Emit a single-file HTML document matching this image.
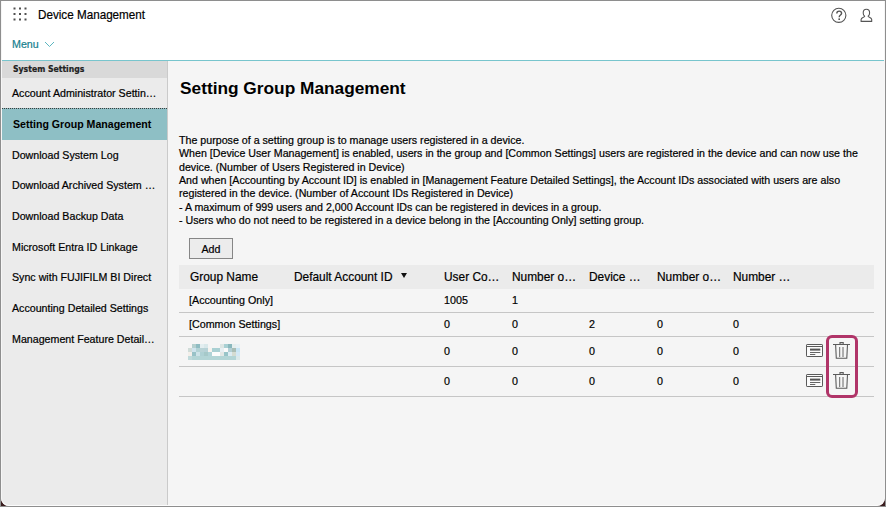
<!DOCTYPE html>
<html lang="en">
<head>
<meta charset="utf-8">
<title>Device Management</title>
<style>
*{box-sizing:border-box;margin:0;padding:0}
html,body{width:886px;height:507px;overflow:hidden;background:#8e8e8e}
body{font-family:"Liberation Sans",Arial,sans-serif;color:#000;position:relative;-webkit-text-stroke:.2px currentColor}
.frame{position:absolute;left:0;top:0;width:886px;height:507px;background:#8e8e8e}
.dark{position:absolute;left:1px;top:1px;width:884px;height:505px;background:#3b1d1f}
.gloss{position:absolute;left:0;top:0;width:884px;height:505px;border:1px solid #f6f6f6;border-bottom-color:#fcfcfc;border-top:none;border-radius:0 0 8px 8px;pointer-events:none}
.win{position:absolute;left:1px;top:1px;width:884px;height:505px;background:#f5f5f5;border-radius:0 0 8px 8px;overflow:hidden}
.hdr{position:absolute;left:0;top:0;width:884px;height:59px;background:#fff}
.tline{position:absolute;left:0;top:59px;width:884px;height:1px;background:#78c5cd}
.apptitle{position:absolute;left:37px;top:6px;font-size:13px;line-height:16px;color:#000;white-space:nowrap;transform-origin:0 0;transform:scaleX(.898)}
.grid{position:absolute;left:12px;top:6px;width:15px;height:15px}
.menu{position:absolute;left:11px;top:36px;font-size:10.7px;line-height:14px;color:#18808e;white-space:nowrap}
.chev{position:absolute;left:43px;top:40px;width:11px;height:7px}
.ico-help{position:absolute;left:829px;top:6px;width:17px;height:17px}
.ico-user{position:absolute;left:858px;top:7px;width:15px;height:15px}
.side{position:absolute;left:0;top:60px;width:166px;height:445px;background:#ebebeb}
.sideborder{position:absolute;left:166px;top:60px;width:1px;height:445px;background:#cacaca}
.sidehead{position:absolute;left:0;top:0;width:166px;height:17px;background:#d9d9d9;font-size:8.6px;font-weight:bold;line-height:16px;padding-left:12px;color:#222;font-family:"DejaVu Sans Condensed","DejaVu Sans","Liberation Sans",sans-serif}
.item{position:absolute;left:0;width:166px;height:31px;font-size:10.67px;line-height:31px;padding-left:11px;white-space:nowrap;color:#000}
.item.sel{background:#8ebfc5;font-weight:bold;-webkit-text-stroke:0;border-top:1px dotted #3c3c3c;padding-left:12px;line-height:31px;font-size:10.6px}
h1{-webkit-text-stroke:0;position:absolute;left:179px;top:77px;font-size:17.3px;line-height:20px;font-weight:bold;color:#000;white-space:nowrap}
.desc{position:absolute;left:178px;top:133px;width:700px;font-size:10.67px;line-height:13.33px;color:#000}
.desc div{white-space:nowrap}
.btn{position:absolute;left:188px;top:237px;width:44px;height:21px;border:1px solid #868686;background:#ececec;font-size:10.67px;line-height:21px;text-align:center;color:#000}
.thead{position:absolute;left:178px;top:264px;width:695px;height:24px;background:#ebebeb}
.th{position:absolute;top:264px;font-size:11.9px;line-height:25px;white-space:nowrap;color:#000}
.td{position:absolute;font-size:10.72px;line-height:14px;white-space:nowrap;color:#000}
.hl{position:absolute;left:178px;width:695px;height:1px;background:#c6c6c6}
.sort{position:absolute;left:400px;top:272px;width:6px;height:5px}
.blur{position:absolute;left:187px;top:343px;width:52px;height:16px}
.ico-det{position:absolute;left:805px;width:17px;height:13px}
.ico-del{position:absolute;left:832px;width:17px;height:17px}
.mark{position:absolute;left:825px;top:334px;width:32px;height:63px;border:3px solid #b03468;border-radius:6px}
</style>
</head>
<body>
<div class="frame"></div>
<div class="dark"></div>
<div class="win">
  <div class="hdr"></div>
  <div class="tline"></div>
  <svg class="grid" viewBox="0 0 15 15"><g fill="#505050">
    <rect x="0.5" y="0.5" width="2" height="2"/><rect x="6" y="0.5" width="2" height="2"/><rect x="11.5" y="0.5" width="2" height="2"/>
    <rect x="0.5" y="6" width="2" height="2"/><rect x="6" y="6" width="2" height="2"/><rect x="11.5" y="6" width="2" height="2"/>
    <rect x="0.5" y="11.5" width="2" height="2"/><rect x="6" y="11.5" width="2" height="2"/><rect x="11.5" y="11.5" width="2" height="2"/>
  </g></svg>
  <div class="apptitle">Device Management</div>
  <div class="menu">Menu</div>
  <svg class="chev" viewBox="0 0 11 7"><path d="M1 1 L5.5 5.5 L10 1" fill="none" stroke="#5bb6c0" stroke-width="1"/></svg>
  <svg class="ico-help" viewBox="0 0 17 17"><circle cx="8.8" cy="8.3" r="7.1" fill="none" stroke="#555" stroke-width="1.1"/><path d="M6.8 6.6 C6.8 4.9 7.9 4.1 9.2 4.1 C10.6 4.1 11.6 5 11.6 6.3 C11.6 8 9.2 8.1 9.2 10.2" fill="none" stroke="#555" stroke-width="1.4"/><rect x="8.4" y="11.4" width="1.6" height="1.6" fill="#555"/></svg>
  <svg class="ico-user" viewBox="0 0 15 15"><path d="M7.4 1.3 C9.3 1.3 10.6 2.8 10.6 4.9 C10.6 6.4 10 7.6 9.1 8.2 C9.2 9.3 12.7 9.4 12.7 11.6 L12.7 13.4 L2.1 13.4 L2.1 11.6 C2.1 9.4 5.6 9.3 5.7 8.2 C4.8 7.6 4.2 6.4 4.2 4.9 C4.2 2.8 5.5 1.3 7.4 1.3 Z" fill="none" stroke="#555" stroke-width="1.1" stroke-linejoin="round"/></svg>

  <div class="side">
    <div class="sidehead">System Settings</div>
    <div class="item" style="top:17px">Account Administrator Settin…</div>
    <div class="item sel" style="top:47px;height:32px">Setting Group Management</div>
    <div class="item" style="top:79px">Download System Log</div>
    <div class="item" style="top:109px">Download Archived System …</div>
    <div class="item" style="top:140px">Download Backup Data</div>
    <div class="item" style="top:171px">Microsoft Entra ID Linkage</div>
    <div class="item" style="top:201px">Sync with FUJIFILM BI Direct</div>
    <div class="item" style="top:232px">Accounting Detailed Settings</div>
    <div class="item" style="top:263px">Management Feature Detail…</div>
  </div>
  <div class="sideborder"></div>

  <h1>Setting Group Management</h1>
  <div class="desc">
    <div>The purpose of a setting group is to manage users registered in a device.</div>
    <div>When [Device User Management] is enabled, users in the group and [Common Settings] users are registered in the device and can now use the</div>
    <div>device. (Number of Users Registered in Device)</div>
    <div>And when [Accounting by Account ID] is enabled in [Management Feature Detailed Settings], the Account IDs associated with users are also</div>
    <div>registered in the device. (Number of Account IDs Registered in Device)</div>
    <div>- A maximum of 999 users and 2,000 Account IDs can be registered in devices in a group.</div>
    <div>- Users who do not need to be registered in a device belong in the [Accounting Only] setting group.</div>
  </div>

  <div class="btn">Add</div>

  <div class="thead"></div>
  <div class="th" style="left:189px">Group Name</div>
  <div class="th" style="left:293px">Default Account ID</div>
  <svg class="sort" viewBox="0 0 6 5"><path d="M0 0 L6 0 L3 5 Z" fill="#111"/></svg>
  <div class="th" style="left:443px">User Co…</div>
  <div class="th" style="left:511px">Number o…</div>
  <div class="th" style="left:588px">Device …</div>
  <div class="th" style="left:656px">Number o…</div>
  <div class="th" style="left:732px">Number …</div>

  <div class="td" style="left:188px;top:292px">[Accounting Only]</div>
  <div class="td" style="left:443px;top:292px">1005</div>
  <div class="td" style="left:511px;top:292px">1</div>
  <div class="hl" style="top:311px"></div>

  <div class="td" style="left:188px;top:316px">[Common Settings]</div>
  <div class="td" style="left:443px;top:316px">0</div>
  <div class="td" style="left:511px;top:316px">0</div>
  <div class="td" style="left:588px;top:316px">2</div>
  <div class="td" style="left:656px;top:316px">0</div>
  <div class="td" style="left:732px;top:316px">0</div>
  <div class="hl" style="top:335px"></div>

  <div class="td" style="left:443px;top:343px">0</div>
  <div class="td" style="left:511px;top:343px">0</div>
  <div class="td" style="left:588px;top:343px">0</div>
  <div class="td" style="left:656px;top:343px">0</div>
  <div class="td" style="left:732px;top:343px">0</div>
  <div class="hl" style="top:365px"></div>

  <div class="td" style="left:443px;top:373px">0</div>
  <div class="td" style="left:511px;top:373px">0</div>
  <div class="td" style="left:588px;top:373px">0</div>
  <div class="td" style="left:656px;top:373px">0</div>
  <div class="td" style="left:732px;top:373px">0</div>
  <div class="hl" style="top:395px"></div>

  <svg class="blur" viewBox="0 0 52 16" shape-rendering="crispEdges"><rect x="4" y="0" width="4" height="4" fill="#b5d0cf"/><rect x="8" y="0" width="4" height="4" fill="#8fbcc2"/><rect x="12" y="0" width="4" height="4" fill="#e3eef0"/><rect x="16" y="0" width="4" height="4" fill="#d9e8ea"/><rect x="32" y="0" width="4" height="4" fill="#dde6e4"/><rect x="36" y="0" width="4" height="4" fill="#a9d0d3"/><rect x="40" y="0" width="4" height="4" fill="#8ab8bd"/><rect x="44" y="0" width="4" height="4" fill="#e6eeee"/><rect x="48" y="0" width="4" height="4" fill="#e8f1f5"/><rect x="0" y="4" width="4" height="4" fill="#d0dcd8"/><rect x="4" y="4" width="4" height="4" fill="#cfe4ee"/><rect x="8" y="4" width="4" height="4" fill="#b2d3d5"/><rect x="12" y="4" width="4" height="4" fill="#b9d3d6"/><rect x="16" y="4" width="4" height="4" fill="#b7d2d7"/><rect x="20" y="4" width="4" height="4" fill="#f6f3ee"/><rect x="24" y="4" width="4" height="4" fill="#a9d0d3"/><rect x="28" y="4" width="4" height="4" fill="#a9d0d3"/><rect x="32" y="4" width="4" height="4" fill="#e6eff3"/><rect x="36" y="4" width="4" height="4" fill="#fafafa"/><rect x="40" y="4" width="4" height="4" fill="#b2cfd4"/><rect x="44" y="4" width="4" height="4" fill="#a9bdb5"/><rect x="48" y="4" width="4" height="4" fill="#c8e6f5"/><rect x="0" y="8" width="4" height="4" fill="#f3efea"/><rect x="4" y="8" width="4" height="4" fill="#98c2c7"/><rect x="8" y="8" width="4" height="4" fill="#cde3e8"/><rect x="12" y="8" width="4" height="4" fill="#afd1d4"/><rect x="16" y="8" width="4" height="4" fill="#a6c9c9"/><rect x="20" y="8" width="4" height="4" fill="#b0d3d7"/><rect x="24" y="8" width="4" height="4" fill="#fcfcfc"/><rect x="28" y="8" width="4" height="4" fill="#fcfcfc"/><rect x="32" y="8" width="4" height="4" fill="#e3e8e6"/><rect x="36" y="8" width="4" height="4" fill="#98c4c8"/><rect x="40" y="8" width="4" height="4" fill="#dcecf3"/><rect x="44" y="8" width="4" height="4" fill="#d5dcd2"/><rect x="48" y="8" width="4" height="4" fill="#d3e8f5"/><rect x="0" y="12" width="4" height="4" fill="#c0dadb"/><rect x="4" y="12" width="4" height="4" fill="#b3d5d6"/><rect x="8" y="12" width="4" height="4" fill="#b3d5d6"/><rect x="12" y="12" width="4" height="4" fill="#b3d5d6"/><rect x="16" y="12" width="4" height="4" fill="#b3d5d6"/><rect x="20" y="12" width="4" height="4" fill="#b3d5d6"/><rect x="24" y="12" width="4" height="4" fill="#b3d5d6"/><rect x="28" y="12" width="4" height="4" fill="#b3d5d6"/><rect x="32" y="12" width="4" height="4" fill="#b3d5d6"/><rect x="36" y="12" width="4" height="4" fill="#b3d5d6"/><rect x="40" y="12" width="4" height="4" fill="#b3d5d6"/><rect x="44" y="12" width="4" height="4" fill="#b3d5d6"/><rect x="48" y="12" width="4" height="4" fill="#dbe9ea"/></svg>

  <svg class="ico-det" style="top:343px" viewBox="0 0 17 13"><rect x="0.5" y="0.5" width="16" height="12" rx="0.6" fill="#fbfbfb" stroke="#5a5a5a"/><path d="M0.5 2.5 H16.5" stroke="#5a5a5a"/><rect x="4" y="4.6" width="10.3" height="2" fill="#555"/><path d="M4 8.5 H14.3 M4 10.5 H9.3" stroke="#666"/></svg>
  <svg class="ico-det" style="top:373px" viewBox="0 0 17 13"><rect x="0.5" y="0.5" width="16" height="12" rx="0.6" fill="#fbfbfb" stroke="#5a5a5a"/><path d="M0.5 2.5 H16.5" stroke="#5a5a5a"/><rect x="4" y="4.6" width="10.3" height="2" fill="#555"/><path d="M4 8.5 H14.3 M4 10.5 H9.3" stroke="#666"/></svg>

  <svg class="ico-del" style="top:341px" viewBox="0 0 17 17"><path d="M0 2.5 H17 M7 2.5 V0.6 H10.2 V2.5 M2.6 2.5 L3.3 16.3 H13.8 L14.5 2.5" fill="none" stroke="#5a5a5a" stroke-width="1.1"/><path d="M6.7 5 V15 M10 5 V15" fill="none" stroke="#666" stroke-width="1"/></svg>
  <svg class="ico-del" style="top:371px" viewBox="0 0 17 17"><path d="M0 2.5 H17 M7 2.5 V0.6 H10.2 V2.5 M2.6 2.5 L3.3 16.3 H13.8 L14.5 2.5" fill="none" stroke="#5a5a5a" stroke-width="1.1"/><path d="M6.7 5 V15 M10 5 V15" fill="none" stroke="#666" stroke-width="1"/></svg>

  <div class="mark"></div>
  <div class="gloss"></div>
</div>
</body>
</html>
